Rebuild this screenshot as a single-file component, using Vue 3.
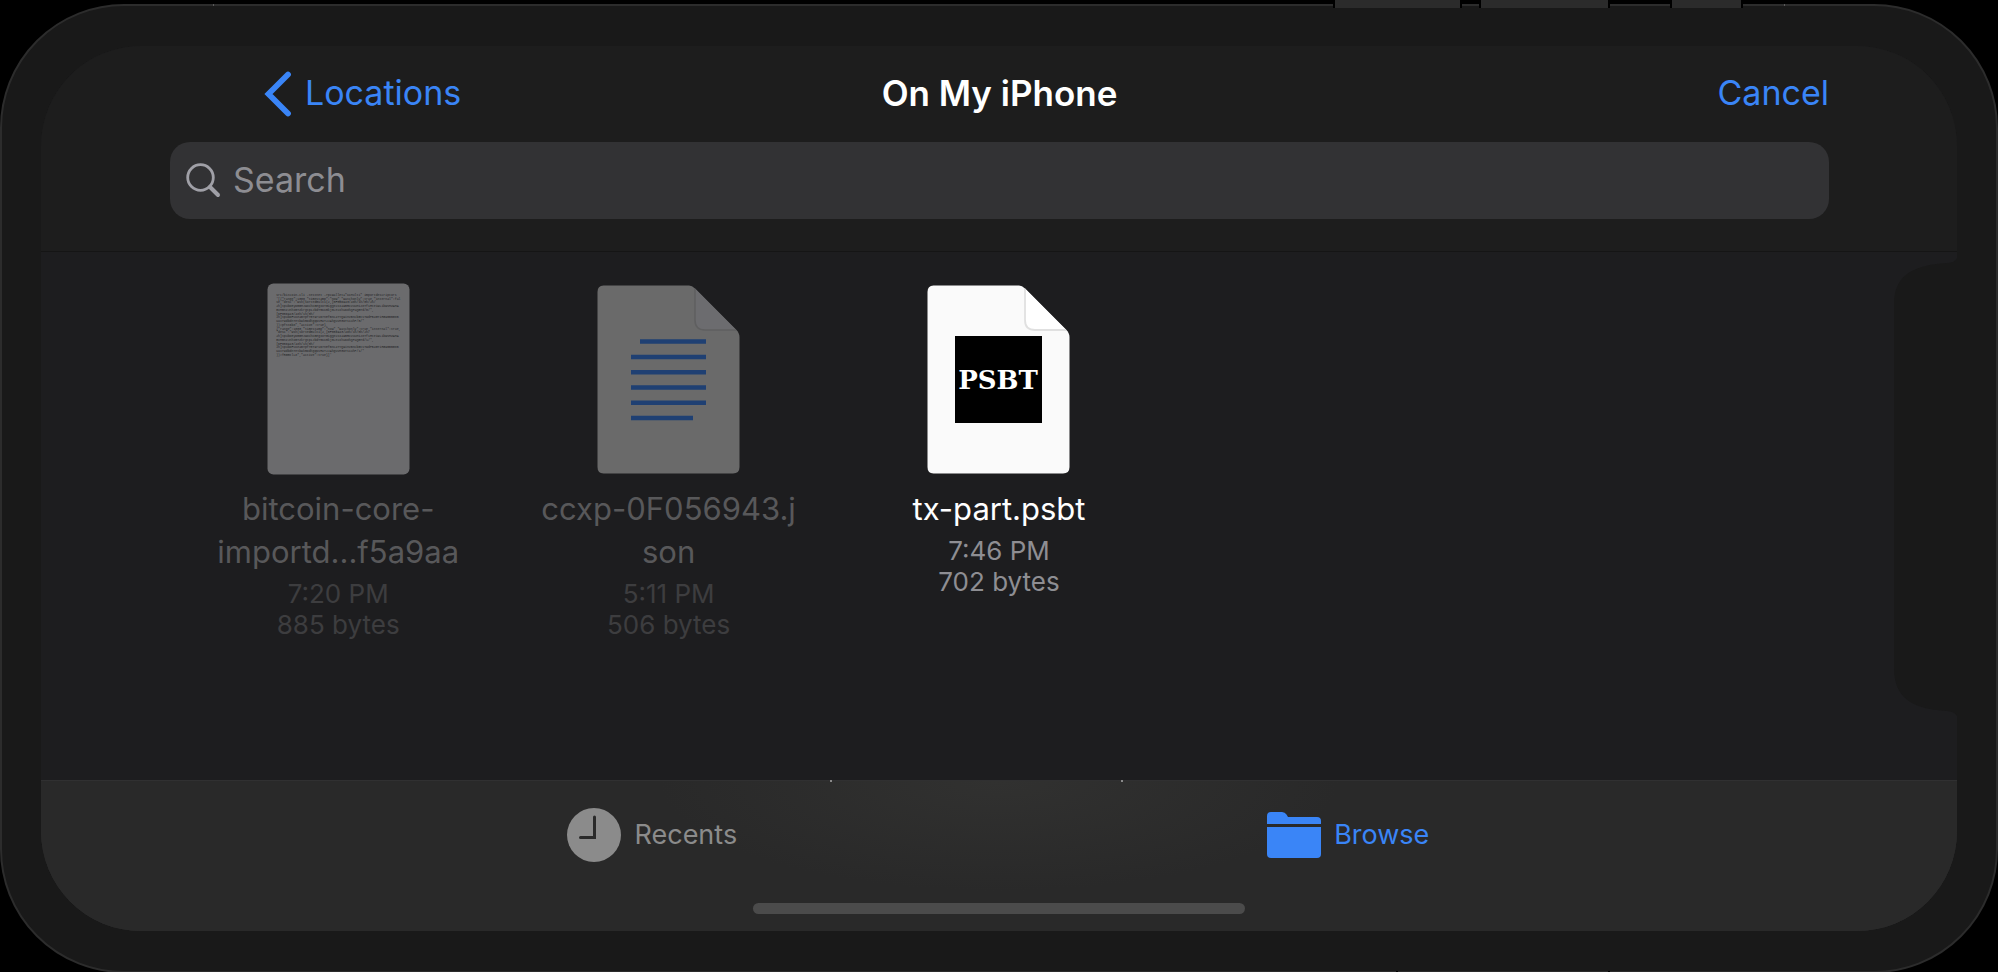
<script setup>
import { ref } from 'vue'

const query = ref('')
const activeTab = ref('browse')

const files = [
  { id: 'core', kind: 'text', name: 'bitcoin-core-\nimportd...f5a9aa', time: '7:20 PM', size: '885 bytes', enabled: false },
  { id: 'ccxp', kind: 'json', name: 'ccxp-0F056943.j\nson', time: '5:11 PM', size: '506 bytes', enabled: false },
  { id: 'psbt', kind: 'psbt', name: 'tx-part.psbt', time: '7:46 PM', size: '702 bytes', enabled: true },
]

const previewLines = [
  'src/bitcoin-cli -testnet -rpcwallet="CCMulti" importdescriptors',
  "'[{\"range\":1000,\"timestamp\":\"now\",\"watchonly\":true,\"internal\":fal",
  'se,"desc":"wsh(sortedmulti(2,[0F056943/48h/1h/0h/2h/',
  '2h]tpubDEyDmBMJwochCBEgIoTGigQeXsIa9BRCVuuMiJ8Tf1HteiwLibWvMZAMA',
  'BVMBnzJnhxmTZkrgtp1JbdT5KCmkj0LeXIhUD8hQPaQmTd/0/*,',
  '[6F056943/48h/1h/0h/',
  '2h]tpubDFcKeaBYpfT5T9ru67nEfBnc4TYQ9inVBncbGtsTwdPB4GTiHG9BBBG8B',
  'UaVrwdbdnTeSb9kmDdhgqNVHUT2JAhguVM3DTs1uhP/0/*',
  '))#pfSt6b8","active":true},',
  '{"range":1000,"timestamp":"now","watchonly":true,"internal":true,',
  '"desc":"wsh(sortedmulti(2,[0F056943/48h/1h/0h/2h/',
  '2h]tpubDEyDmBMJwochCBEgIoTGigQeXsIa9BRCVuuMiJ8Tf1HteiwLibWvMZAMA',
  'BVMBnzJnhxmTZkrgtp1JbdT5KCmkj0LeXIhUD8hQPaQmTd/1/*,',
  '[6F056943/48h/1h/0h/',
  '2h]tpubDFcKeaBYpfT5T9ru67nEfBnc4TYQ9inVBncbGtsTwdPB4GTiHG9BBBG8B',
  'UaVrwdbdnTeSb9kmDdhgqNVHUT2JAhguVM3DTs1uhP/1/*',
  "))#fRGmtlL8\",\"active\":true}]'",
]
</script>

<template>
  <div class="device">
    <span class="side-button mute"></span>
    <span class="side-button volume-up"></span>
    <span class="side-button volume-down"></span>
    <span class="side-button power"></span>
    <span class="antenna top-left"></span>
    <span class="antenna top-right"></span>

    <div class="screen">
      <header class="header">
        <nav class="nav">
          <button type="button" class="link back">
            <svg class="chevron" viewBox="0 0 28 46" aria-hidden="true">
              <path d="M24 3.5L4.5 23L24 42.5" fill="none" stroke="currentColor" stroke-width="5.8" stroke-linecap="round" />
            </svg>
            <span class="label">Locations</span>
          </button>
          <h1 class="title label">On My iPhone</h1>
          <button type="button" class="link cancel"><span class="label">Cancel</span></button>
        </nav>
        <label class="search">
          <svg class="lens" viewBox="0 0 36 36" aria-hidden="true">
            <g fill="none" stroke="currentColor" stroke-linecap="round">
              <circle cx="14.5" cy="14.5" r="12.8" stroke-width="2.8" />
              <path d="M24 24L32 32" stroke-width="4" />
            </g>
          </svg>
          <input v-model="query" class="label" type="text" placeholder="Search" aria-label="Search" />
        </label>
      </header>

      <main class="files">
        <button v-for="f in files" :key="f.id" type="button" class="file" :disabled="!f.enabled">
          <svg v-if="f.kind === 'text'" class="thumb" viewBox="0 0 1430 1920" aria-hidden="true">
            <rect x="5" y="5" width="1420" height="1910" rx="60" fill="#6b6b6d" />
            <text class="preview">
              <tspan v-for="(line, i) in previewLines" :key="i" x="92" :y="128 + i * 37.5">{{ line }}</tspan>
            </text>
          </svg>
          <svg v-else-if="f.kind === 'json'" class="thumb" viewBox="0 0 143 192" aria-hidden="true">
            <path d="M6.500 2.500H92Q95 2.500 98 5.500L139 46.500Q142.500 50 142.500 54V184Q142.500 190.500 136 190.500H6.500Q0.500 190.500 0.500 184V9Q0.500 2.500 6.500 2.500Z" fill="#6a6a6a" />
            <path d="M98 5.500V37Q98 47 108 47H139Z" fill="#6c6c6f" />
            <path d="M98 6V37Q98 47 108 47H139" fill="none" stroke="#5f5f60" stroke-width="1.500" />
            <path d="M43 58.500H109M34 74H109M34 89.300H109M34 104.500H109M34 119.700H109M34 135H96" stroke="#1f4073" stroke-width="4.600" />
          </svg>
          <svg v-else class="thumb" viewBox="0 0 143 192" aria-hidden="true">
            <path d="M6.500 2.500H92Q95 2.500 98 5.500L139 46.500Q142.500 50 142.500 54V184Q142.500 190.500 136 190.500H6.500Q0.500 190.500 0.500 184V9Q0.500 2.500 6.500 2.500Z" fill="#fafafa" />
            <path d="M98 5.500V37Q98 47 108 47H139Z" fill="#ffffff" />
            <path d="M98 6V37Q98 47 108 47H139" fill="none" stroke="#e0e0e0" stroke-width="1.800" />
            <rect x="28" y="53" width="87" height="87" fill="#000000" />
            <text class="badge" x="71" y="106" text-anchor="middle">PSBT</text>
          </svg>
          <span class="name">{{ f.name }}</span>
          <span class="meta">{{ f.time }}</span>
          <span class="meta">{{ f.size }}</span>
        </button>
      </main>

      <footer class="tabbar">
        <nav class="tabs">
          <button type="button" class="tab" :class="{ active: activeTab === 'recents' }" @click="activeTab = 'recents'">
            <svg class="tab-icon" viewBox="0 0 54 54" aria-hidden="true">
              <circle cx="27" cy="27" r="27" fill="currentColor" />
              <path d="M27.500 9V29.500H13.500" fill="none" stroke="#2a2a2a" stroke-width="3" stroke-linecap="round" />
            </svg>
            <span class="tab-label">Recents</span>
          </button>
          <button type="button" class="tab" :class="{ active: activeTab === 'browse' }" @click="activeTab = 'browse'">
            <svg class="tab-icon" viewBox="0 0 54 54" aria-hidden="true">
              <path d="M0 16V8Q0 4 4 4H15Q18 4 19.500 6.500L21 9H50Q54 9 54 13V16Z" fill="currentColor" />
              <path d="M0 19H54V46Q54 50 50 50H4Q0 50 0 46Z" fill="currentColor" />
            </svg>
            <span class="tab-label">Browse</span>
          </button>
        </nav>
        <div class="home-indicator"></div>
        <span class="glint left"></span>
        <span class="glint right"></span>
      </footer>

      <svg class="notch" viewBox="0 0 66 470" aria-hidden="true">
        <path d="M66 0Q65 11 54 11C25 13 1 20 1 52V416C1 450 25 457 54 459Q65 460 66 470Z" fill="#191919" />
      </svg>
    </div>
  </div>
</template>

<style>
html,
body {
  background: #000000;
}
body {
  margin: 0;
}
#app {
  height: 100vh;
  overflow: hidden;
  display: flow-root;
}
</style>

<style scoped>
.device {
  box-sizing: border-box;
  position: relative;
  display: flex;
  min-height: calc(100vh - 3px);
  margin-top: 4px;
  padding: 40px 39px;
  border: 2px solid #2c2c2c;
  border-radius: 124px;
  background: #191919;
  font-family: Inter, 'Liberation Sans', sans-serif;
}
.side-button {
  position: absolute;
  height: 8px;
  top: -6px;
  background: #2b2b2b;
  border: solid #000000;
  border-width: 0 2px;
}
.mute {
  right: 253px;
  width: 69px;
}
.volume-up {
  right: 386px;
  width: 127px;
}
.volume-down {
  right: 534px;
  width: 125px;
}
.power {
  top: auto;
  right: 386px;
  bottom: -2px;
  height: 2px;
  width: 210px;
}
.antenna {
  position: absolute;
  top: -2px;
  width: 1px;
  height: 2px;
  background: #5a5a5a;
}
.top-left {
  left: 211px;
}
.top-right {
  right: 211px;
}

.screen {
  position: relative;
  flex: 1;
  min-width: 0;
  display: flex;
  flex-direction: column;
  overflow: hidden;
  border-radius: 100px;
  background: #1d1d1f;
}
button {
  padding: 0;
  border: 0;
  background: none;
  font: inherit;
  cursor: pointer;
}

.header {
  padding: 0 128px 32px 129px;
  background: #1d1d1d;
  border-bottom: 1px solid #151515;
}
.nav {
  display: grid;
  grid-template-columns: 1fr auto 1fr;
  align-items: center;
  height: 96px;
  font-size: 34px;
  line-height: 44px;
}
.label {
  padding: 0 0 2px;
}
.link {
  color: #3a85f7;
}
.back {
  justify-self: start;
  display: flex;
  align-items: center;
  gap: 13px;
  margin-left: 94px;
}
.chevron {
  width: 28px;
  height: 46px;
}
.title {
  margin: 0;
  font-size: 35px;
  font-weight: 600;
  color: #ffffff;
}
.cancel {
  justify-self: end;
}
.cancel .label {
  display: block;
}
.search {
  display: flex;
  align-items: center;
  gap: 11px;
  height: 77px;
  padding: 0 16px;
  border-radius: 20px;
  background: #323234;
  color: #a0a0a7;
}
.lens {
  flex: none;
  width: 36px;
  height: 36px;
}
.search input {
  flex: 1;
  min-width: 0;
  border: 0;
  outline: 0;
  background: none;
  font: 34px/44px Inter, 'Liberation Sans', sans-serif;
  color: #ffffff;
}
.search input::placeholder {
  color: #8d8d92;
  opacity: 1;
}

.files {
  flex: 1;
  display: grid;
  grid-template-columns: repeat(5, 1fr);
  align-items: start;
  padding: 31px 132px 0;
}
.file {
  display: flex;
  flex-direction: column;
  align-items: center;
  color: #ffffff;
}
.thumb {
  width: 143px;
  height: 192px;
  margin-bottom: 12px;
}
.preview {
  font: 32px 'Liberation Mono', monospace;
  fill: #242426;
}
.badge {
  font: bold 26px 'DejaVu Serif', serif;
  fill: #ffffff;
}
.name {
  margin-bottom: 5px;
  font-size: 31px;
  line-height: 43px;
  text-align: center;
  white-space: pre-line;
}
.meta {
  font-size: 26px;
  line-height: 31px;
  color: #8e8e93;
}
.file:disabled {
  cursor: default;
  color: #58585a;
}
.file:disabled .meta {
  color: #3d3d3f;
}

.tabbar {
  position: relative;
  display: flex;
  flex-direction: column;
  align-items: center;
  padding-bottom: 17px;
  border-top: 1px solid #303031;
  background: radial-gradient(ellipse 340px 110px at 50% 0, #313130, #292929) #292929;
}
.tabs {
  display: grid;
  grid-template-columns: 1fr 1fr;
  width: 73%;
  height: 108px;
  margin-left: 6px;
}
.tab {
  display: flex;
  align-items: center;
  justify-content: center;
  gap: 13px;
  font-size: 27px;
  line-height: 36px;
  color: #8b8b8b;
}
.tab.active {
  color: #3a85f7;
}
.tab-label {
  min-width: 102px;
  text-align: left;
}
.tab-icon {
  width: 54px;
  height: 54px;
}
.home-indicator {
  width: 492px;
  height: 11px;
  margin-top: 14px;
  border-radius: 6px;
  background: #4b4b4b;
}
.glint {
  position: absolute;
  top: -1px;
  width: 2px;
  height: 2px;
  background: #8a8a8a;
}
.glint.left {
  left: calc(50% - 169px);
}
.glint.right {
  left: calc(50% + 122px);
}
.notch {
  position: absolute;
  top: 206px;
  right: -2px;
  width: 66px;
  height: 470px;
}
</style>
